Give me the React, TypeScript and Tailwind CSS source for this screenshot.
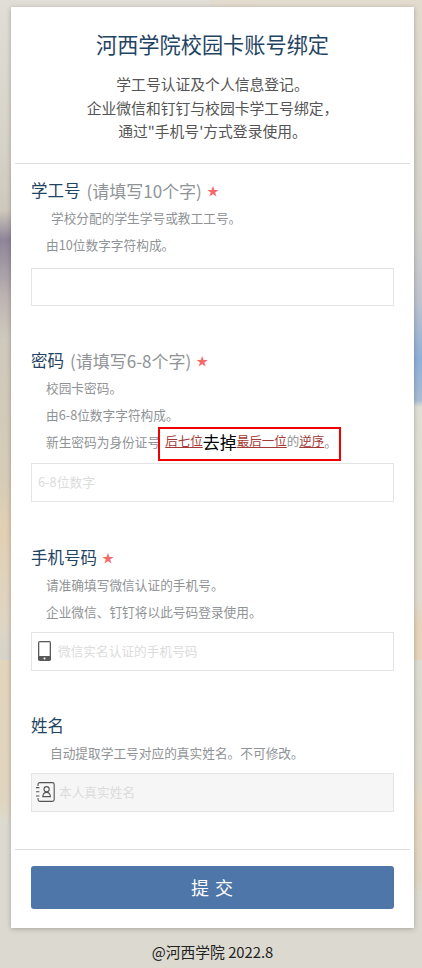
import React from 'react';

const cjk = 'font-["Noto_Sans_CJK_SC",sans-serif]';

// small helper for the grey hint lines under each label
function Hint({ children, className = '' }: { children: React.ReactNode; className?: string }) {
  return <p className={`text-[12.7px] leading-[27px] text-[#8f9396] ${className}`}>{children}</p>;
}

function Label({ name, note, required }: { name: string; note?: string; required?: boolean }) {
  return (
    <div className="flex h-[27px] items-center text-[16.5px] text-[#1f4464]">
      <span>{name}</span>
      {note && <span className="ml-[6px] text-[17px] text-[#8f9396]">{note}</span>}
      {required && <span className="ml-[5px] text-[12px] text-[#f46a6a]">★</span>}
    </div>
  );
}

function PhoneIcon() {
  return (
    <svg width="13" height="20" viewBox="0 0 13 20" className="shrink-0">
      <rect x="0" y="0" width="13" height="20" rx="1.8" fill="#5a5a5a" />
      <rect x="1.3" y="1.3" width="10.4" height="13.7" fill="#fff" />
      <circle cx="6.5" cy="17.5" r="1" fill="#fff" />
    </svg>
  );
}

function ContactIcon() {
  return (
    <svg width="19" height="20" viewBox="0 0 19 20" fill="none" stroke="#555" strokeWidth="1.1" className="shrink-0">
      <path d="M2 4V2.4C2 1.3 2.8.6 3.8.6h12.6c1 0 1.8.7 1.8 1.8v15.2c0 1-.8 1.8-1.8 1.8H3.8c-1 0-1.8-.8-1.8-1.8V16" />
      <circle cx="10.6" cy="7.2" r="2.6" />
      <path d="M6.8 14.6c.2-2.8 1.6-4.2 3.8-4.2s3.6 1.4 3.8 4.2z" />
      <path d="M0 5.6h3.4M0 9.8h3.4M0 14h3.4" />
    </svg>
  );
}

export default function App() {
  return (
    <div
      className={`flex min-h-[968px] flex-col items-center pt-[7px] pr-[8px] pl-[11px] ${cjk} [background:linear-gradient(180deg,#e0ded6_0,#d6d2c8_150px,#cfc8bc_210px,#8f8599_240px,#bfb6b4_300px,#cfc9bc_340px,#d6ccb8_480px,#e2d0b4_530px,#dfd5c3_620px,#d6d3c9_660px,#e3d4bc_660px,#e0d5c0_800px,#dcdad0_825px,#dcdad0_100%)_left/50%_100%_no-repeat,linear-gradient(180deg,#e2dbce_0,#dcd8cc_100px,#d4d2cc_230px,#c0c4cf_300px,#8fb0d8_360px,#a8bcd4_400px,#dfdfd5_407px,#e0dcd0_600px,#e6d4bc_625px,#e6d4bc_660px,#dcdcd2_660px,#dedacd_780px,#e6d8c2_810px,#dfd5c3_880px,#dcdad0_895px,#dcdad0_100%)_right/50%_100%_no-repeat]`}
    >
      <div className="flex h-[921px] w-[403px] flex-col bg-white px-[4px] shadow-[0_1px_5px_rgba(0,0,0,0.25)]">
        {/* Header */}
        <div className="flex h-[157px] flex-col items-center border-b border-[#dddddd] pt-[21px]">
          <h1 className="text-[21.2px] leading-[32px] text-[#1f4464]">河西学院校园卡账号绑定</h1>
          <div className="mt-[12px] text-center text-[14.8px] leading-[23.5px] text-[#555]">
            <p>学工号认证及个人信息登记。</p>
            <p>企业微信和钉钉与校园卡学工号绑定，</p>
            <p>通过"手机号'方式登录使用。</p>
          </div>
        </div>

        {/* Form */}
        <div className="flex-1 px-[16px] pt-[13px]">
          <section className="h-[170px]">
            <Label name="学工号" note="(请填写10个字)" required />
            <Hint className="pl-[20px]">学校分配的学生学号或教工工号。</Hint>
            <Hint className="pl-[15px]">由10位数字字符构成。</Hint>
            <div className="mt-[10px] h-[38px] border border-[#e4e4e4]" />
          </section>

          <section className="h-[197px]">
            <Label name="密码" note="(请填写6-8个字)" required />
            <Hint className="pl-[15px]">校园卡密码。</Hint>
            <Hint className="pl-[15px]">由6-8位数字字符构成。</Hint>
            <div className="flex h-[27px] items-center pl-[15px] text-[12.7px] text-[#8f9396]">
              <span>新生密码为身份证号</span>
              <span className="relative flex h-[27px] items-center">
                <span className="absolute top-[-1px] left-[-2px] h-[34px] w-[183px] border-2 border-[#f00000]" />
                <span className="ml-[5px] text-[12.5px] text-[#a33a35] underline">后七位</span>
                <span className="text-[17px] text-black">去掉</span>
                <span className="text-[12.5px] text-[#a33a35] underline">最后一位</span>
                <span className="text-[12.5px]">的</span>
                <span className="text-[12.5px] text-[#a33a35] underline">逆序</span>
                <span>。</span>
              </span>
            </div>
            <div className="mt-[8px] flex h-[39px] items-center border border-[#e4e4e4] px-[6px] pb-[2px] text-[12.8px] text-[#dcdcdc]">6-8位数字</div>
          </section>

          <section className="h-[168px]">
            <Label name="手机号码" required />
            <Hint className="pl-[15px]">请准确填写微信认证的手机号。</Hint>
            <Hint className="pl-[15px]">企业微信、钉钉将以此号码登录使用。</Hint>
            <div className="mt-[7px] flex h-[39px] items-center gap-[7px] border border-[#e4e4e4] px-[6px] pb-[2px] text-[12.7px] text-[#dcdcdc]">
              <PhoneIcon />
              <span>微信实名认证的手机号码</span>
            </div>
          </section>

          <section>
            <Label name="姓名" />
            <Hint className="pl-[19px]">自动提取学工号对应的真实姓名。不可修改。</Hint>
            <div className="mt-[7px] flex h-[39px] items-center gap-[4px] border border-[#e4e4e4] bg-[#f6f6f6] px-[4px] pb-[2px] text-[12.7px] text-[#dcdcdc]">
              <ContactIcon />
              <span>本人真实姓名</span>
            </div>
          </section>
        </div>

        {/* Submit */}
        <div className="h-[79px] border-t border-[#dddddd] px-[16px] pt-[16px]">
          <button className="h-[43px] w-full rounded-[3px] bg-[#4f76a8] text-[18px] tracking-[1px] text-white">提 交</button>
        </div>
      </div>
      <p className="mt-[14px] text-[14.8px] leading-[20px] text-[#222]">@河西学院 2022.8</p>
    </div>
  );
}
